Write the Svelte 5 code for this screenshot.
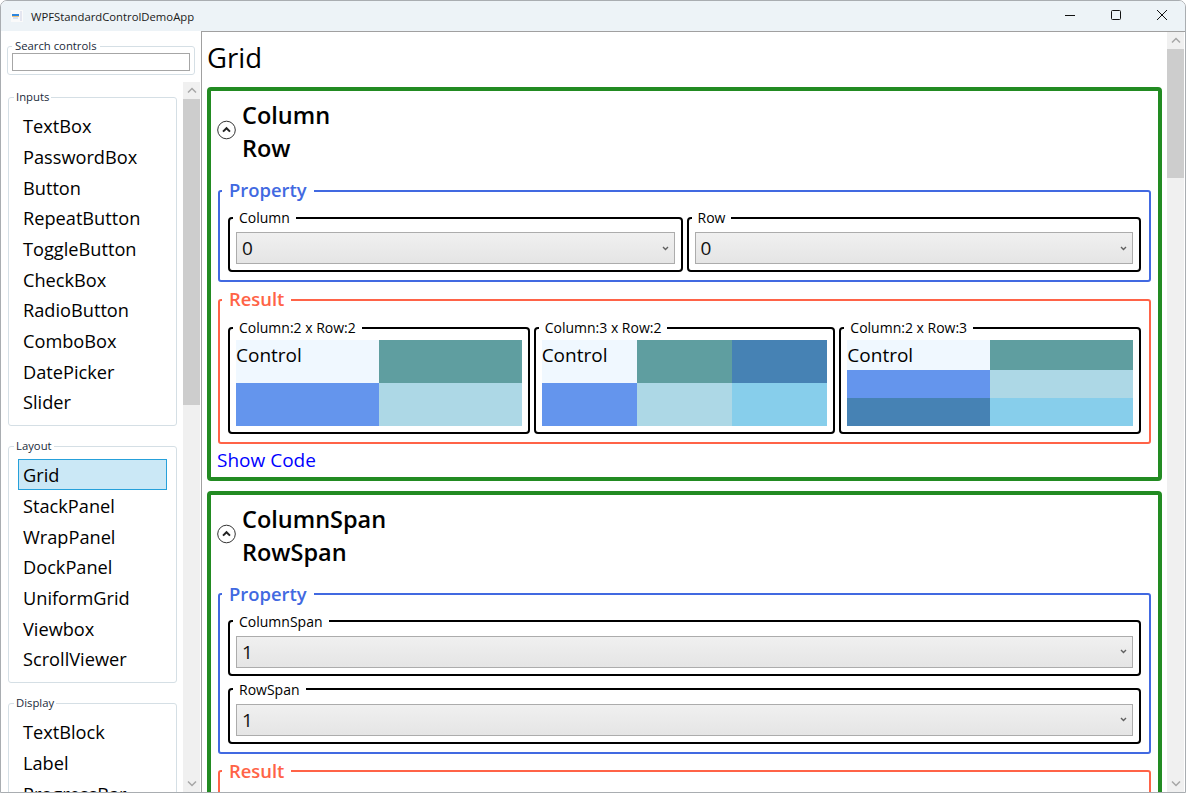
<script>
  const groups = [
    { name: "Inputs", items: ["TextBox", "PasswordBox", "Button", "RepeatButton", "ToggleButton", "CheckBox", "RadioButton", "ComboBox", "DatePicker", "Slider"] },
    { name: "Layout", items: ["Grid", "StackPanel", "WrapPanel", "DockPanel", "UniformGrid", "Viewbox", "ScrollViewer"] },
    { name: "Display", items: ["TextBlock", "Label", "ProgressBar"] },
  ];

  let selected = $state("Grid");

  const samples = [
    { title: "Column:2 x Row:2", cols: 2, rows: 2, cells: ["aliceblue", "cadetblue", "cornflowerblue", "lightblue"] },
    { title: "Column:3 x Row:2", cols: 3, rows: 2, cells: ["aliceblue", "cadetblue", "steelblue", "cornflowerblue", "lightblue", "skyblue"] },
    { title: "Column:2 x Row:3", cols: 2, rows: 3, cells: ["aliceblue", "cadetblue", "cornflowerblue", "lightblue", "steelblue", "skyblue"] },
  ];
</script>

{#snippet combo(label, value)}
  <fieldset class="inner">
    <legend>{label}</legend>
    <div class="combo">
      <span>{value}</span>
      <svg width="7" height="5" viewBox="0 0 7 5"><path d="M1 1 3.5 3.5 6 1" fill="none" stroke="#606060" stroke-width="1.4" /></svg>
    </div>
  </fieldset>
{/snippet}

{#snippet head(a, b)}
  <div class="card-head">
    <svg width="20" height="20" viewBox="0 0 20 20">
      <circle cx="9.5" cy="10" r="8.8" fill="#fff" stroke="#333" stroke-width="1" />
      <path d="M6 11.6 9.5 8.2 13 11.6" fill="none" stroke="#222" stroke-width="2" />
    </svg>
    <h2>{a}<br />{b}</h2>
  </div>
{/snippet}

<div class="window">
  <header class="titlebar">
    <svg class="app-icon" width="14" height="14" viewBox="0 0 14 14">
      <rect x="1" y="1" width="12" height="12" fill="#fafafa" />
      <rect x="10" y="2" width="2" height="10" fill="#e4e6f0" />
      <rect x="2" y="5" width="7" height="2" fill="#2e86de" />
      <rect x="2" y="7" width="7" height="1" fill="#f0c27a" />
      <rect x="3" y="8" width="5" height="2" fill="#d5e3f5" />
    </svg>
    <span class="app-title">WPFStandardControlDemoApp</span>
    <div class="caption">
      <svg width="46" height="30" viewBox="0 0 46 30"><path d="M18 14.5H28" stroke="#111" stroke-width="1" /></svg>
      <svg width="46" height="30" viewBox="0 0 46 30"><rect x="18.5" y="9.5" width="9" height="9" rx="1" fill="none" stroke="#111" stroke-width="1" /></svg>
      <svg width="46" height="30" viewBox="0 0 46 30"><path d="M18 9 28 19M28 9 18 19" stroke="#111" stroke-width="1" /></svg>
    </div>
  </header>

  <div class="body">
    <aside class="side">
      <fieldset class="search">
        <legend>Search controls</legend>
        <input type="text" />
      </fieldset>

      <div class="side-scroll">
        <div class="side-list">
          {#each groups as group}
            <fieldset class="group">
              <legend>{group.name}</legend>
              {#each group.items as item}
                <button class="item" class:sel={selected === item} onclick={() => (selected = item)}>{item}</button>
              {/each}
            </fieldset>
          {/each}
        </div>
        <div class="scrollbar">
          <div class="arrow"><svg width="10" height="7" viewBox="0 0 10 7"><path d="M1 5.5 5 1.5 9 5.5" fill="none" stroke="#a6a6a6" stroke-width="1.5" /></svg></div>
          <div class="thumb side-thumb"></div>
          <div class="track"></div>
          <div class="arrow"><svg width="10" height="7" viewBox="0 0 10 7"><path d="M1 1.5 5 5.5 9 1.5" fill="none" stroke="#a6a6a6" stroke-width="1.5" /></svg></div>
        </div>
      </div>
    </aside>

    <main class="main">
      <div class="content">
        <h1>Grid</h1>

        <section class="card">
          {@render head("Column", "Row")}
          <fieldset class="prop">
            <legend>Property</legend>
            <div class="two">
              {@render combo("Column", "0")}
              {@render combo("Row", "0")}
            </div>
          </fieldset>
          <fieldset class="result">
            <legend>Result</legend>
            <div class="three">
              {#each samples as s}
                <fieldset class="inner">
                  <legend>{s.title}</legend>
                  <div class="sample" style="grid-template-columns: repeat({s.cols}, 1fr); grid-template-rows: repeat({s.rows}, 1fr)">
                    {#each s.cells as c, i}
                      <div style="background: {c}">{i === 0 ? "Control" : ""}</div>
                    {/each}
                  </div>
                </fieldset>
              {/each}
            </div>
          </fieldset>
          <div class="show-code">Show Code</div>
        </section>

        <section class="card">
          {@render head("ColumnSpan", "RowSpan")}
          <fieldset class="prop">
            <legend>Property</legend>
            <div class="stack">
              {@render combo("ColumnSpan", "1")}
              {@render combo("RowSpan", "1")}
            </div>
          </fieldset>
          <fieldset class="result">
            <legend>Result</legend>
            <div class="result-rest"></div>
          </fieldset>
        </section>
      </div>
      <div class="scrollbar">
        <div class="arrow"><svg width="10" height="7" viewBox="0 0 10 7"><path d="M1 5.5 5 1.5 9 5.5" fill="none" stroke="#a6a6a6" stroke-width="1.5" /></svg></div>
        <div class="thumb main-thumb"></div>
        <div class="track"></div>
        <div class="arrow"><svg width="10" height="7" viewBox="0 0 10 7"><path d="M1 1.5 5 5.5 9 1.5" fill="none" stroke="#a6a6a6" stroke-width="1.5" /></svg></div>
      </div>
    </main>
  </div>
</div>

<style>
  :global(body) {
    background: #fff;
    font-family: "Open Sans", "Liberation Sans", sans-serif;
    color: #000;
  }

  .window {
    width: 1186px;
    height: 793px;
    box-sizing: border-box;
    border: 1px solid #a9adb1;
    border-radius: 7px 7px 0 0;
    overflow: hidden;
    display: flex;
    flex-direction: column;
  }

  .titlebar {
    height: 30px;
    flex: none;
    background: #edf3f7;
    display: flex;
    align-items: center;
    padding-left: 9px;
  }

  .app-title {
    margin-left: 7px;
    font-size: 11.3px;
    color: #1a1a1a;
  }

  .caption {
    margin-left: auto;
    display: flex;
  }

  .body {
    flex: 1;
    min-height: 0;
    display: flex;
  }

  .side {
    width: 200px;
    flex: none;
    display: flex;
    flex-direction: column;
    padding-top: 8px;
    box-sizing: border-box;
  }

  fieldset {
    margin: 0;
    min-width: 0;
  }

  .search {
    margin: 0 6px 0 6px;
    padding: 0 4px 4px 4px;
    border: 1px solid #d5dfe5;
    border-radius: 3px;
    height: 36px;
    box-sizing: border-box;
  }

  .search legend,
  .group legend {
    font-size: 11.3px;
    line-height: 14px;
    color: #1a2a3a;
  }

  .search legend {
    padding: 0 3px;
  }

  .group legend {
    padding: 0 2px;
    margin-left: -4px;
  }

  .search input {
    display: block;
    width: 100%;
    height: 18px;
    box-sizing: border-box;
    border: 1px solid #a6a6a6;
    padding: 0;
    margin: 0;
    background: #fff;
    outline: none;
  }

  .side-scroll {
    margin-top: 7px;
    margin-left: 7px;
    flex: 1;
    min-height: 0;
    display: flex;
    overflow: hidden;
  }

  .side-list {
    width: 175px;
    flex: none;
    padding-top: 8px;
  }

  .group {
    width: 169px;
    box-sizing: border-box;
    border: 1px solid #d5dfe5;
    border-radius: 3px;
    padding: 6px 9px 8px;
    margin-bottom: 13.5px;
  }

  .item {
    display: block;
    width: 100%;
    height: 30.67px;
    box-sizing: border-box;
    padding: 2px 0 0 4px;
    border: 1px solid transparent;
    background: none;
    font: inherit;
    font-size: 18.2px;
    line-height: 26px;
    text-align: left;
    color: #000;
  }

  .item.sel {
    background: #cbe8f6;
    border-color: #26a0da;
  }

  .scrollbar {
    width: 17px;
    flex: none;
    background: #f0f0f0;
    display: flex;
    flex-direction: column;
  }

  .arrow {
    height: 17px;
    flex: none;
    display: flex;
    align-items: center;
    justify-content: center;
  }

  .thumb {
    background: #cdcdcd;
    flex: none;
  }

  .side-thumb {
    height: 306px;
  }

  .main-thumb {
    height: 129px;
  }

  .track {
    flex: 1;
  }

  .main {
    flex: 1;
    min-width: 0;
    border-left: 1px solid #a0a0a0;
    border-top: 1px solid #a0a0a0;
    display: flex;
    padding-right: 1px;
    background: #fff;
  }

  .content {
    flex: 1;
    min-width: 0;
    overflow: hidden;
    padding: 0 5px;
  }

  h1 {
    margin: 0 0 10px;
    font-size: 27.5px;
    font-weight: 400;
    line-height: 38px;
    padding-top: 7px;
  }

  .card {
    border: 4px solid #228b22;
    border-radius: 4px;
    padding: 8px 7px 3px 6px;
    margin-bottom: 10px;
  }

  .card-head {
    display: flex;
    align-items: center;
    gap: 5px;
    margin-bottom: 13px;
  }

  .card-head svg {
    margin-bottom: 4px;
  }

  h2 {
    margin: 0;
    font-size: 23.5px;
    font-weight: 600;
    line-height: 33px;
  }

  .prop,
  .result {
    border-radius: 3px;
    border-style: solid;
    border-width: 2px;
    margin-left: 1px;
  }

  .prop {
    padding: 6px 8px 8px;
    border-color: #4169e1;
    margin-bottom: 5px;
  }

  .result {
    padding: 7px 8px 8px;
    border-color: #ff6347;
  }

  .prop > legend,
  .result > legend {
    font-size: 18.4px;
    font-weight: 600;
    line-height: 23px;
    padding: 0 7px 2px;
    margin-left: -6px;
  }

  .prop > legend {
    color: #4169e1;
  }

  .result > legend {
    color: #ff6347;
  }

  .two {
    display: grid;
    grid-template-columns: 1fr 1fr;
    gap: 4px;
  }

  .three {
    display: grid;
    grid-template-columns: 1fr 1fr 1fr;
    gap: 4px;
  }

  .stack {
    display: flex;
    flex-direction: column;
    gap: 5px;
  }

  .inner {
    border: 2px solid #000;
    border-radius: 4px;
    padding: 6px 6px 6px;
    min-width: 0;
  }

  .result .inner {
    padding-top: 4px;
  }

  .inner legend {
    font-size: 14px;
    line-height: 17px;
    padding: 0 6px;
    margin-left: -3px;
    white-space: nowrap;
    color: #000;
  }

  .combo {
    height: 32px;
    box-sizing: border-box;
    border: 1px solid #acacac;
    background: linear-gradient(#f0f0f0, #e5e5e5);
    display: flex;
    align-items: center;
    justify-content: space-between;
    padding: 0 5px;
    font-size: 19px;
    color: #111;
  }

  .sample {
    display: grid;
    height: 85.5px;
    font-size: 19px;
    line-height: 30px;
  }

  .show-code {
    font-size: 19px;
    color: #0000ff;
    line-height: 28px;
    margin-top: 2px;
  }

  .result-rest {
    height: 60px;
  }
</style>
